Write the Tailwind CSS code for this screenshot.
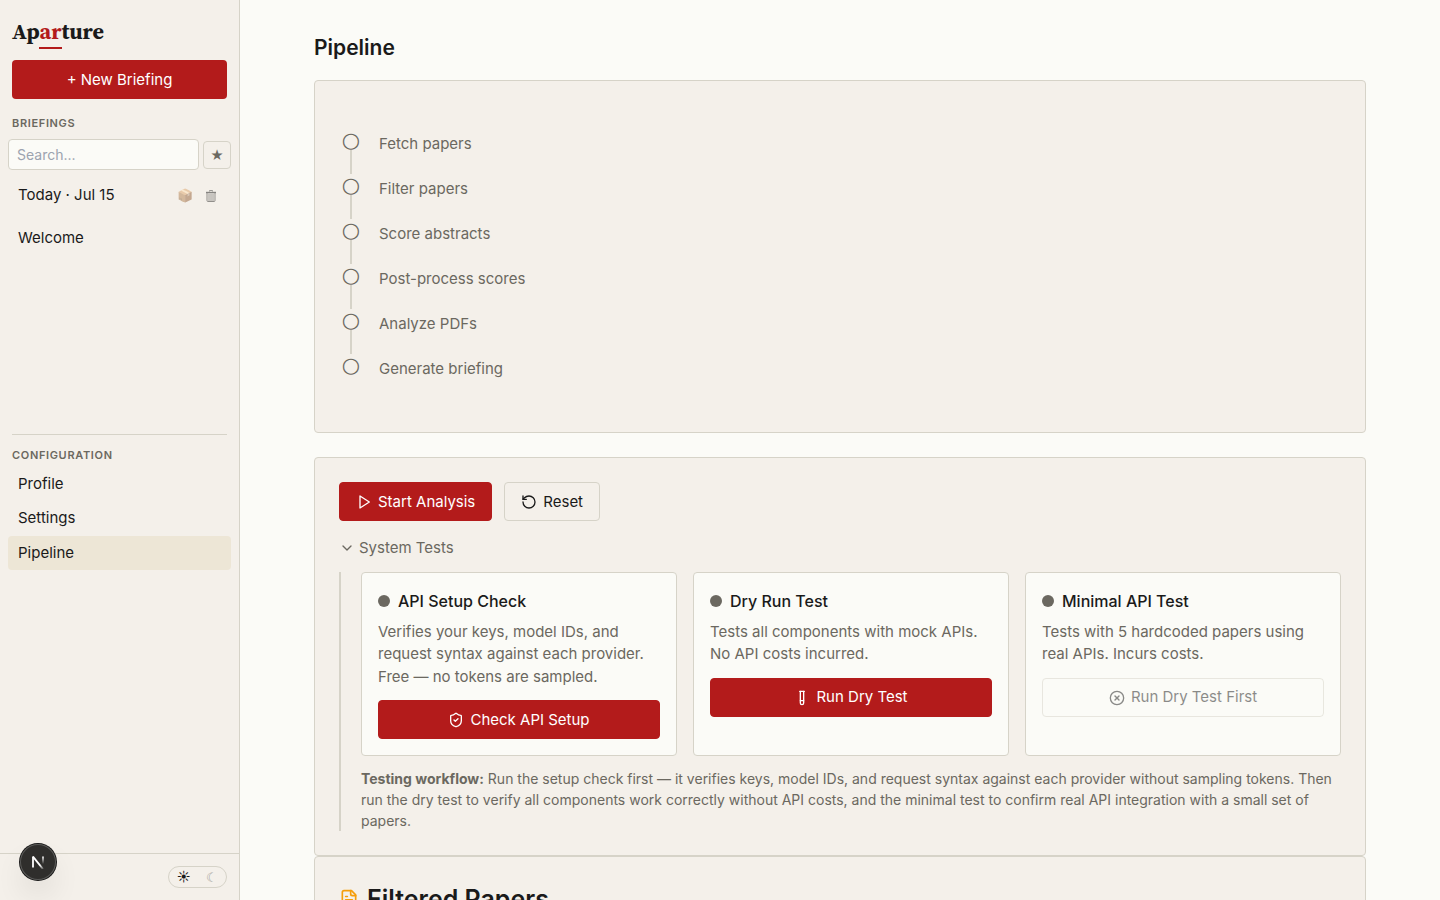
<!DOCTYPE html>
<html lang="en">
<head>
    <meta charset="UTF-8">
    <meta name="viewport" content="width=device-width, initial-scale=1.0">
    <title>Aparture</title>
    <script src="https://cdn.jsdelivr.net/npm/@tailwindcss/browser@4"></script>
</head>
<body class="flex h-screen overflow-hidden bg-[#fbfbf7] font-['Inter',sans-serif] text-[15px] leading-normal text-[#1a1a1a]">

    <!-- Sidebar -->
    <aside class="relative flex w-60 shrink-0 flex-col border-r border-[#d6d3c8] bg-[#f4f0ea]">
        <div class="px-3 pt-4">
            <a href="#" class="flex h-[30px] items-center font-['Source_Serif_4','Source_Serif_Pro','Noto_Serif_CJK_SC','Noto_Serif','Liberation_Serif',serif] text-[22px] font-bold">
                <span>Ap<span class="border-b-2 border-[#b31b1b] pb-px text-[#b31b1b]">ar</span>ture</span>
            </a>
            <button class="mt-3.5 h-[39px] w-full rounded bg-[#b31b1b] px-4 pt-px text-white">+ New Briefing</button>
            <h2 class="mt-4 text-[11px] leading-4 font-semibold tracking-[0.06em] text-[#6b6860] uppercase">Briefings</h2>
        </div>

        <div class="mt-2 flex items-center gap-1 px-2">
            <input type="text" aria-label="Search briefings" placeholder="Search..." class="h-[31px] min-w-0 flex-1 rounded border border-[#d6d3c8] bg-[#fbfbf7] px-2 text-sm placeholder:text-[#9ca3af]">
            <button aria-label="Show starred" class="flex size-7 items-center justify-center rounded border border-[#d6d3c8] pt-0.5 text-[13px] text-[#6b6860]">★</button>
        </div>

        <nav class="mt-2 px-2">
            <div class="flex h-[35px] items-center rounded px-2.5">
                <a href="#" class="flex-1">Today · Jul 15</a>
                <button aria-label="Archive" class="px-1 text-[13px] opacity-50">📦</button>
                <button aria-label="Delete" class="ml-1 px-1 opacity-50">
                    <svg width="12" height="12" viewBox="0 0 12 12" fill="none" stroke="#1a1a1a">
                        <path d="M4.500 1.500V.5h3v1" stroke-width=".8"/>
                        <path d="M1 2.500h10" stroke-width="1.400"/>
                        <path d="M2 3v7.500q0 1 1 1h6q1 0 1-1V3" stroke-width=".9"/>
                        <path d="M4 3.500v7.500M6 3.500v7.500M8 3.500v7.500" stroke-width=".8"/>
                    </svg>
                </button>
            </div>
            <a href="#" class="mt-2 flex h-[35px] items-center rounded px-2.5">Welcome</a>
        </nav>

        <div class="mx-3 mt-auto border-t border-[#d6d3c8] pt-3">
            <h2 class="text-[11px] leading-4 font-semibold tracking-[0.06em] text-[#6b6860] uppercase">Configuration</h2>
        </div>
        <nav class="mt-1 mb-[283px] px-2">
            <a href="#" class="block rounded px-2.5 py-1.5">Profile</a>
            <a href="#" class="block rounded px-2.5 py-1.5">Settings</a>
            <a href="#" class="block rounded bg-[#ede6d6] px-2.5 py-1.5">Pipeline</a>
        </nav>

        <div class="flex justify-end border-t border-[#d6d3c8] p-3">
            <button aria-label="Toggle theme" class="flex h-[22px] w-[59px] items-center justify-around rounded-full border border-[#d6d3c8] pt-px text-[13px]">
                <span>☀</span>
                <span class="opacity-40">☾</span>
            </button>
        </div>

        <!-- Dev tools badge -->
        <button aria-label="Open dev tools" class="absolute bottom-5 left-5 flex size-9 items-center justify-center rounded-full bg-[#2f2e2c] shadow-[0_0_0_1px_#171717,inset_0_0_0_1px_#5a5a58,0_16px_32px_-8px_rgba(0,0,0,0.24)]">
            <svg width="14" height="14" viewBox="0 0 14 14" fill="none" stroke-width="1.8">
                <defs>
                    <linearGradient id="stem" x1="0" y1="1" x2="0" y2="9" gradientUnits="userSpaceOnUse">
                        <stop stop-color="#fff"/>
                        <stop offset="1" stop-color="#fff" stop-opacity="0"/>
                    </linearGradient>
                    <linearGradient id="slash" x1="9" y1="10" x2="13" y2="15" gradientUnits="userSpaceOnUse">
                        <stop stop-color="#fff"/>
                        <stop offset="1" stop-color="#fff" stop-opacity="0"/>
                    </linearGradient>
                </defs>
                <path d="M2 12.5V1.5" stroke="#fff"/>
                <path d="M2 1.6L12 14" stroke="url(#slash)"/>
                <path d="M12 1.5V9.5" stroke="url(#stem)"/>
            </svg>
        </button>
    </aside>

    <!-- Main content -->
    <main class="min-w-0 flex-1 overflow-hidden">
        <div class="mx-auto max-w-[1100px] px-6 pt-8">
            <h1 class="mb-4 text-[21px] leading-8 font-semibold">Pipeline</h1>

            <!-- Steps -->
            <section class="mb-6 rounded border border-[#d6d3c8] bg-[#f4f0ea] px-6 pt-12 pb-[33px] text-[#6b6860]">
                <ol>
                    <li class="flex h-[45px] gap-4">
                        <div class="flex w-6 flex-col items-center"><span class="h-[21px] font-['DejaVu_Sans',sans-serif] text-[21px] leading-[23px]">○</span><span class="h-6 w-0.5 bg-[#d6d3c8]"></span></div>
                        <span class="pt-1">Fetch papers</span>
                    </li>
                    <li class="flex h-[45px] gap-4">
                        <div class="flex w-6 flex-col items-center"><span class="h-[21px] font-['DejaVu_Sans',sans-serif] text-[21px] leading-[23px]">○</span><span class="h-6 w-0.5 bg-[#d6d3c8]"></span></div>
                        <span class="pt-1">Filter papers</span>
                    </li>
                    <li class="flex h-[45px] gap-4">
                        <div class="flex w-6 flex-col items-center"><span class="h-[21px] font-['DejaVu_Sans',sans-serif] text-[21px] leading-[23px]">○</span><span class="h-6 w-0.5 bg-[#d6d3c8]"></span></div>
                        <span class="pt-1">Score abstracts</span>
                    </li>
                    <li class="flex h-[45px] gap-4">
                        <div class="flex w-6 flex-col items-center"><span class="h-[21px] font-['DejaVu_Sans',sans-serif] text-[21px] leading-[23px]">○</span><span class="h-6 w-0.5 bg-[#d6d3c8]"></span></div>
                        <span class="pt-1">Post-process scores</span>
                    </li>
                    <li class="flex h-[45px] gap-4">
                        <div class="flex w-6 flex-col items-center"><span class="h-[21px] font-['DejaVu_Sans',sans-serif] text-[21px] leading-[23px]">○</span><span class="h-6 w-0.5 bg-[#d6d3c8]"></span></div>
                        <span class="pt-1">Analyze PDFs</span>
                    </li>
                    <li class="flex h-[45px] gap-4">
                        <div class="flex w-6 flex-col items-center"><span class="h-[21px] font-['DejaVu_Sans',sans-serif] text-[21px] leading-[23px]">○</span></div>
                        <span class="pt-1">Generate briefing</span>
                    </li>
                </ol>
            </section>

            <!-- Controls and tests -->
            <section class="rounded border border-[#d6d3c8] bg-[#f4f0ea] p-6">
                <div class="flex gap-3">
                    <button class="flex h-[39px] items-center gap-1.5 rounded border border-[#b31b1b] bg-[#b31b1b] px-4 pt-px text-white">
                        <svg class="size-4" viewBox="0 0 24 24" fill="none" stroke="currentColor" stroke-width="2" stroke-linecap="round" stroke-linejoin="round"><polygon points="6 3 20 12 6 21 6 3"/></svg>
                        Start Analysis
                    </button>
                    <button class="flex h-[39px] items-center gap-1.5 rounded border border-[#d6d3c8] px-4 pt-px">
                        <svg class="size-4" viewBox="0 0 24 24" fill="none" stroke="currentColor" stroke-width="2" stroke-linecap="round" stroke-linejoin="round"><path d="M3 12a9 9 0 1 0 9-9 9.75 9.75 0 0 0-6.74 2.74L3 8"/><path d="M3 3v5h5"/></svg>
                        Reset
                    </button>
                </div>

                <button class="mt-4 flex items-center gap-1 text-[#6b6860]">
                    <svg class="size-4" viewBox="0 0 24 24" fill="none" stroke="currentColor" stroke-width="2" stroke-linecap="round" stroke-linejoin="round"><path d="m6 9 6 6 6-6"/></svg>
                    System Tests
                </button>

                <div class="mt-3 border-l-2 border-[#d6d3c8] pl-5">
                    <div class="grid grid-cols-3 gap-4">
                        <div class="rounded border border-[#d6d3c8] bg-[#fbfbf7] p-4">
                            <h3 class="mb-2 flex items-center gap-2 text-base font-medium"><span class="size-3 rounded-full bg-[#6b6860]"></span>API Setup Check</h3>
                            <p class="mb-3 text-[#6b6860]">Verifies your keys, model IDs, and request syntax against each provider. Free — no tokens are sampled.</p>
                            <button class="flex h-[39px] w-full items-center justify-center gap-1.5 rounded border border-[#b31b1b] bg-[#b31b1b] px-4 pt-px text-white">
                                <svg class="size-4" viewBox="0 0 24 24" fill="none" stroke="currentColor" stroke-width="2" stroke-linecap="round" stroke-linejoin="round"><path d="M20 13c0 5-3.5 7.5-7.66 8.95a1 1 0 0 1-.67-.01C7.5 20.5 4 18 4 13V6a1 1 0 0 1 1-1c2 0 4.5-1.2 6.24-2.72a1.17 1.17 0 0 1 1.52 0C14.51 3.81 17 5 19 5a1 1 0 0 1 1 1z"/><path d="m9 12 2 2 4-4"/></svg>
                                Check API Setup
                            </button>
                        </div>
                        <div class="rounded border border-[#d6d3c8] bg-[#fbfbf7] p-4">
                            <h3 class="mb-2 flex items-center gap-2 text-base font-medium"><span class="size-3 rounded-full bg-[#6b6860]"></span>Dry Run Test</h3>
                            <p class="mb-3 text-[#6b6860]">Tests all components with mock APIs. No API costs incurred.</p>
                            <button class="flex h-[39px] w-full items-center justify-center gap-1.5 rounded border border-[#b31b1b] bg-[#b31b1b] px-4 pt-px text-white">
                                <svg class="size-4" viewBox="0 0 24 24" fill="none" stroke="currentColor" stroke-width="2" stroke-linecap="round" stroke-linejoin="round"><path d="M14.5 2v17.5c0 1.4-1.1 2.5-2.5 2.5s-2.5-1.1-2.5-2.5V2"/><path d="M8.5 2h7"/><path d="M14.5 16h-5"/></svg>
                                Run Dry Test
                            </button>
                        </div>
                        <div class="rounded border border-[#d6d3c8] bg-[#fbfbf7] p-4">
                            <h3 class="mb-2 flex items-center gap-2 text-base font-medium"><span class="size-3 rounded-full bg-[#6b6860]"></span>Minimal API Test</h3>
                            <p class="mb-3 text-[#6b6860]">Tests with 5 hardcoded papers using real APIs. Incurs costs.</p>
                            <button disabled class="flex h-[39px] w-full items-center justify-center gap-1.5 rounded border border-[#d6d3c8] px-4 pt-px opacity-50">
                                <svg class="size-4" viewBox="0 0 24 24" fill="none" stroke="currentColor" stroke-width="2" stroke-linecap="round" stroke-linejoin="round"><circle cx="12" cy="12" r="10"/><path d="m15 9-6 6"/><path d="m9 9 6 6"/></svg>
                                Run Dry Test First
                            </button>
                        </div>
                    </div>
                    <p class="mt-3 text-sm leading-[21px] text-[#6b6860]"><strong>Testing workflow:</strong> Run the setup check first — it verifies keys, model IDs, and request syntax against each provider without sampling tokens. Then run the dry test to verify all components work correctly without API costs, and the minimal test to confirm real API integration with a small set of papers.</p>
                </div>
            </section>

            <!-- Results -->
            <section class="rounded border border-[#d6d3c8] bg-[#f4f0ea] p-6">
                <h2 class="flex items-center gap-2 text-[25px] leading-9 font-semibold">
                    <svg class="size-5 text-[#f59e0b]" viewBox="0 0 24 24" fill="none" stroke="currentColor" stroke-width="2" stroke-linecap="round" stroke-linejoin="round"><path d="M15 2H6a2 2 0 0 0-2 2v16a2 2 0 0 0 2 2h12a2 2 0 0 0 2-2V7Z"/><path d="M14 2v4a2 2 0 0 0 2 2h4"/><path d="M10 9H8"/><path d="M16 13H8"/><path d="M16 17H8"/></svg>
                    Filtered Papers
                </h2>
            </section>
        </div>
    </main>
</body>
</html>
